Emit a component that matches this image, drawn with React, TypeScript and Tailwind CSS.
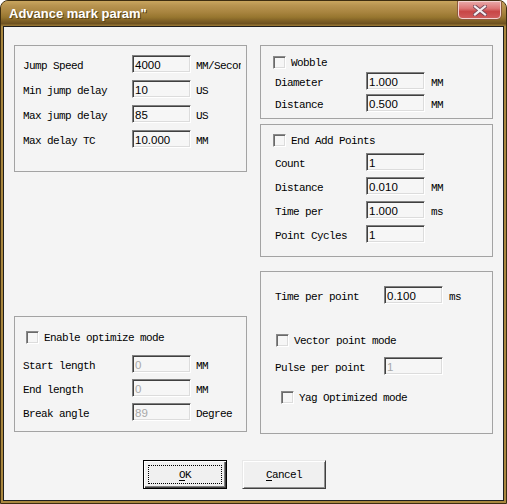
import React from "react";

const mono = "font-['Liberation_Mono',monospace] text-[11px] tracking-[-0.6px] text-black whitespace-nowrap leading-[13px]";

function Field({ value, disabled }: { value: string; disabled?: boolean }) {
  return (
    <div className="w-[59px] h-[18px] shrink-0 border border-t-[#808080] border-l-[#808080] border-b-white border-r-white shadow-[inset_1px_1px_0_#404040,inset_-1px_-1px_0_#dcdcdc] bg-[#f6f6f6] pl-[2px] pt-[1px] flex items-center">
      <span
        className={`font-['Liberation_Sans',sans-serif] text-[11.5px] leading-[14px] ${disabled ? "text-[#a8a8a8]" : "text-black"}`}
      >
        {value}
      </span>
    </div>
  );
}

function Row({
  label,
  labelW,
  value,
  unit,
  unitCls,
  disabled,
  cls,
}: {
  label: string;
  labelW: string;
  value: string;
  unit?: string;
  unitCls?: string;
  disabled?: boolean;
  cls: string;
}) {
  return (
    <div className={`flex items-center h-[18px] ${cls}`}>
      <span className={`${mono} shrink-0 translate-y-[2px] ${labelW}`}>{label}</span>
      <Field value={value} disabled={disabled} />
      {unit ? <span className={`${mono} translate-y-[2px] ${unitCls ?? ""}`}>{unit}</span> : null}
    </div>
  );
}

function Check({ label, cls }: { label: string; cls: string }) {
  return (
    <div className={`flex items-center h-[13px] gap-[5px] ${cls}`}>
      <div className="w-[13px] h-[13px] shrink-0 border border-t-[#8a8a8a] border-l-[#8a8a8a] border-b-white border-r-white shadow-[inset_1px_1px_0_#6a6a6a,inset_-1px_-1px_0_#dcdcdc] bg-[#f6f6f6]" />
      <span className={`${mono} translate-y-[1px]`}>{label}</span>
    </div>
  );
}

export default function App() {
  return (
    <div className="w-[507px] h-[504px] border border-[#3d2d10] rounded-t-[8px] bg-[#a9873f] flex flex-col overflow-hidden">
      {/* Title bar */}
      <div className="h-[25px] shrink-0 flex items-start bg-[linear-gradient(to_bottom,#c9a65f_0%,#b89450_18%,#a8843f_45%,#97762f_65%,#7a5c24_82%,#6e5220_90%,#9c7a36_100%)]">
        <span className="pl-[8px] pt-[5px] font-['Liberation_Sans',sans-serif] font-bold text-[13px] leading-[16px] text-white [text-shadow:1px_1px_0_#5a4418]">
          Advance mark param"
        </span>
        <div className="ml-auto mr-[5px] w-[43px] h-[18px] rounded-b-[4px] border border-[#f3d2d2] bg-[linear-gradient(to_bottom,#e8a4a4_0%,#dc7676_40%,#c84646_60%,#d05c5c_100%)] flex items-center justify-center shadow-[0_0_0_1px_#8a5a3a]">
          <svg width="14" height="11" viewBox="0 0 14 11">
            <path d="M2 1.5 L12 9.5 M12 1.5 L2 9.5" stroke="#7a4a5a" strokeWidth="4" strokeLinecap="square" />
            <path d="M2 1.5 L12 9.5 M12 1.5 L2 9.5" stroke="#f4eef0" strokeWidth="2.2" strokeLinecap="square" />
          </svg>
        </div>
      </div>
      {/* Client */}
      <div className="mx-[2px] mb-[2px] flex-1 border border-[#1e1e1e] bg-[#f4f4f4] pt-[18px] pl-[10px] flex flex-col">
        <div className="flex gap-[13px] h-[389px] items-start">
          {/* Left column */}
          <div className="flex flex-col w-[233px]">
            <div className="w-[233px] h-[127px] border border-[#a3a3a3] overflow-hidden flex flex-col pt-[9px] pl-[8px]">
              <Row cls="" label="Jump Speed" labelW="w-[109px]" value="4000" unit="MM/Second" unitCls="ml-[5px] w-[45px] overflow-hidden" />
              <Row cls="mt-[7px]" label="Min jump delay" labelW="w-[109px]" value="10" unit="US" unitCls="ml-[5px]" />
              <Row cls="mt-[7px]" label="Max jump delay" labelW="w-[109px]" value="85" unit="US" unitCls="ml-[5px]" />
              <Row cls="mt-[7px]" label="Max delay TC" labelW="w-[109px]" value="10.000" unit="MM" unitCls="ml-[5px]" />
            </div>
            <div className="w-[233px] h-[116px] mt-[144px] border border-[#a3a3a3] overflow-hidden flex flex-col">
              <Check cls="mt-[14px] ml-[11px]" label="Enable optimize mode" />
              <Row cls="mt-[11px] ml-[8px]" label="Start length" labelW="w-[109px]" value="0" unit="MM" unitCls="ml-[5px]" disabled />
              <Row cls="mt-[6px] ml-[8px]" label="End length" labelW="w-[109px]" value="0" unit="MM" unitCls="ml-[5px]" disabled />
              <Row cls="mt-[6px] ml-[8px]" label="Break angle" labelW="w-[109px]" value="89" unit="Degree" unitCls="ml-[5px]" disabled />
            </div>
          </div>
          {/* Right column */}
          <div className="flex flex-col w-[233px]">
            <div className="w-[233px] h-[74px] border border-[#a3a3a3] overflow-hidden flex flex-col">
              <Check cls="mt-[10px] ml-[12px]" label="Wobble" />
              <Row cls="mt-[3px] ml-[14px]" label="Diameter" labelW="w-[91px]" value="1.000" unit="MM" unitCls="ml-[6px]" />
              <Row cls="mt-[4px] ml-[14px]" label="Distance" labelW="w-[91px]" value="0.500" unit="MM" unitCls="ml-[6px]" />
            </div>
            <div className="w-[233px] h-[133px] mt-[5px] border border-[#a3a3a3] overflow-hidden flex flex-col">
              <Check cls="mt-[9px] ml-[12px]" label="End Add Points" />
              <Row cls="mt-[6px] ml-[14px]" label="Count" labelW="w-[91px]" value="1" />
              <Row cls="mt-[6px] ml-[14px]" label="Distance" labelW="w-[91px]" value="0.010" unit="MM" unitCls="ml-[6px]" />
              <Row cls="mt-[6px] ml-[14px]" label="Time per" labelW="w-[91px]" value="1.000" unit="ms" unitCls="ml-[6px]" />
              <Row cls="mt-[6px] ml-[14px]" label="Point Cycles" labelW="w-[91px]" value="1" />
            </div>
            <div className="w-[233px] h-[163px] mt-[14px] border border-[#a3a3a3] overflow-hidden flex flex-col">
              <Row cls="mt-[14px] ml-[14px]" label="Time per point" labelW="w-[109px]" value="0.100" unit="ms" unitCls="ml-[6px]" />
              <Check cls="mt-[30px] ml-[15px]" label="Vector point mode" />
              <Row cls="mt-[10px] ml-[14px]" label="Pulse per point" labelW="w-[109px]" value="1" disabled />
              <Check cls="mt-[16px] ml-[20px]" label="Yag Optimized mode" />
            </div>
          </div>
        </div>
        {/* Buttons */}
        <div className="mt-[26px] pl-[129px] flex gap-[15px]">
          <div className="w-[84px] h-[29px] border border-black bg-[#f0f0f0] shadow-[inset_1px_1px_0_#ffffff,inset_-1px_-1px_0_#404040,inset_-2px_-2px_0_#808080] p-[4px]">
            <div className="w-full h-full border border-dotted border-black flex items-center justify-center">
              <span className={`${mono} translate-y-[1px]`}>
                <span className="underline underline-offset-2">O</span>K
              </span>
            </div>
          </div>
          <div className="w-[84px] h-[29px] bg-[#f0f0f0] border border-t-[#e8e8e8] border-l-[#e8e8e8] border-b-[#404040] border-r-[#404040] shadow-[inset_1px_1px_0_#ffffff,inset_-1px_-1px_0_#909090] flex items-center justify-center">
            <span className={`${mono} translate-y-[1px]`}>
              <span className="underline underline-offset-2">C</span>ancel
            </span>
          </div>
        </div>
      </div>
    </div>
  );
}
